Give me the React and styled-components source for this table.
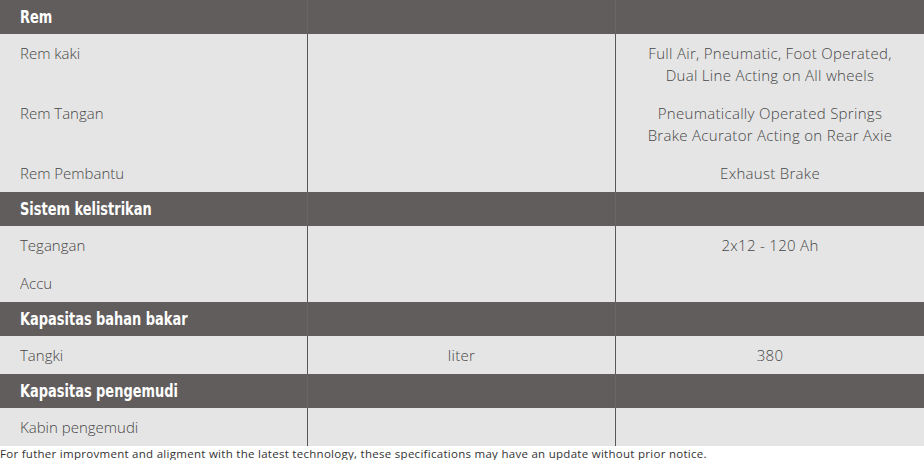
import React from 'react';
import styled, { createGlobalStyle } from 'styled-components';

const GlobalStyle = createGlobalStyle`
	body {
		margin: 0;
		background: #fff;
		font-family: 'Open Sans', 'DejaVu Sans', sans-serif;
	}
`;

const Table = styled('div')`
	width: 924px;
	display: flex;
	flex-direction: column;
`;

const Row = styled('div')`
	display: grid;
	grid-template-columns: 308px 308px 1fr;
	background: ${props => (props.head ? '#615d5d' : '#e5e5e5')};
`;

const Cell = styled('div')`
	padding: ${props => (props.head ? '0 20px' : '8px 20px')};
	height: ${props => (props.head ? '34px' : 'auto')};
	border-right: 1px solid ${props => (props.head ? '#6a6666' : '#5a5757')};
	color: #474747;
	font-size: 15px;
	font-weight: 300;
	line-height: 22px;
	letter-spacing: ${props => (props.align === 'center' ? '0.3px' : '0')};
	text-align: ${props => props.align || 'left'};
	&:last-child {
		border-right: none;
	}
`;

const HeadLabel = styled('span')`
	display: inline-block;
	color: #fff;
	font-family: 'DejaVu Sans Condensed', 'Liberation Sans Narrow', sans-serif;
	font-weight: 700;
	font-size: 18px;
	line-height: 34px;
	white-space: nowrap;
	transform: scaleX(0.8);
	transform-origin: left center;
`;

const Note = styled('div')`
	font-family: 'Open Sans', 'DejaVu Sans', sans-serif;
	font-size: 11.5px;
	letter-spacing: 0.28px;
	color: #333;
	line-height: 13px;
	padding-top: 1px;
	white-space: nowrap;
`;

const sections = [
	{
		title: 'Rem',
		rows: [
			['Rem kaki', '', ['Full Air, Pneumatic, Foot Operated,', 'Dual Line Acting on All wheels']],
			['Rem Tangan', '', ['Pneumatically Operated Springs', 'Brake Acurator Acting on Rear Axie']],
			['Rem Pembantu', '', ['Exhaust Brake']]
		]
	},
	{
		title: 'Sistem kelistrikan',
		rows: [
			['Tegangan', '', ['2x12 - 120 Ah']],
			['Accu', '', []]
		]
	},
	{
		title: 'Kapasitas bahan bakar',
		rows: [['Tangki', 'liter', ['380']]]
	},
	{
		title: 'Kapasitas pengemudi',
		rows: [['Kabin pengemudi', '', []]]
	}
];

const App = () => (
	<>
		<GlobalStyle />
		<Table>
			{sections.map(section => (
				<React.Fragment key={section.title}>
					<Row head>
						<Cell head>
							<HeadLabel>{section.title}</HeadLabel>
						</Cell>
						<Cell head />
						<Cell head />
					</Row>
					{section.rows.map(([label, unit, value]) => (
						<Row key={label}>
							<Cell>{label}</Cell>
							<Cell align='center'>{unit}</Cell>
							<Cell align='center'>
								{value.map(line => (
									<div key={line}>{line}</div>
								))}
							</Cell>
						</Row>
					))}
				</React.Fragment>
			))}
		</Table>
		<Note>
			For futher improvment and aligment with the latest technology, these specifications may have an update without prior notice.
		</Note>
	</>
);

export default App;
